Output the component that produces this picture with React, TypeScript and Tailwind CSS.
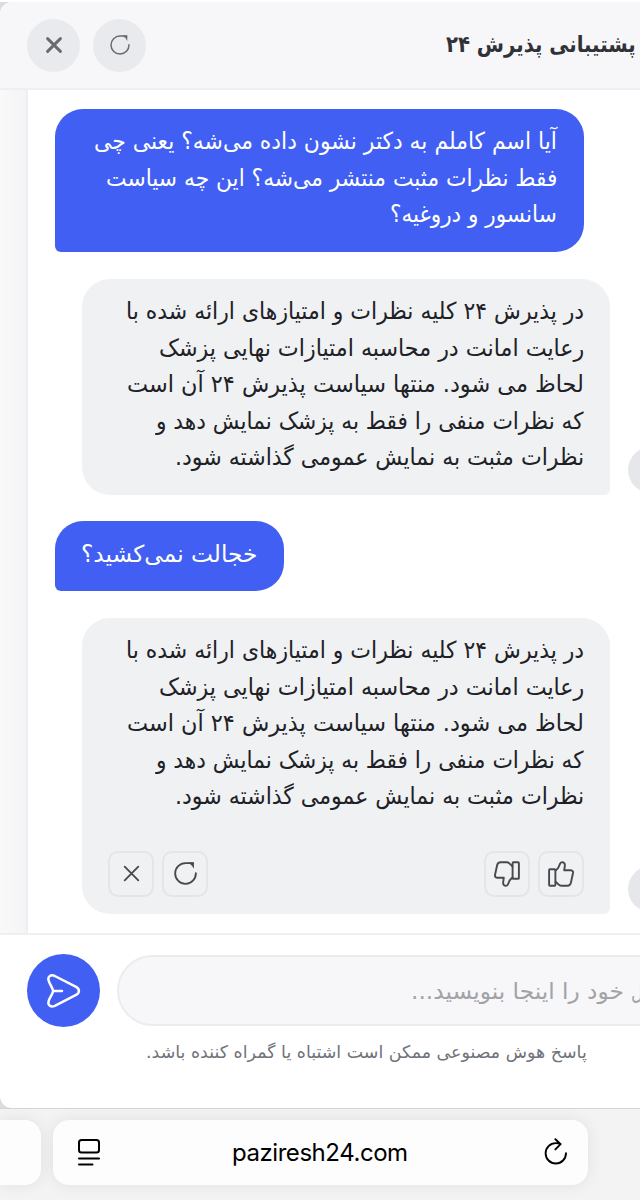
import React, { useLayoutEffect, useRef, useState } from 'react';
import clsx from 'clsx';

type Line = { text: string; width: number };

const question: Line[] = [
  { text: 'آیا اسم کاملم به دکتر نشون داده می‌شه؟ یعنی چی', width: 463 },
  { text: 'فقط نظرات مثبت منتشر می‌شه؟ این چه سیاست', width: 451 },
  { text: 'سانسور و دروغیه؟', width: 167 },
];

const followUp: Line[] = [{ text: 'خجالت نمی‌کشید؟', width: 176 }];

const answer: Line[] = [
  { text: 'در پذیرش ۲۴ کلیه نظرات و امتیازهای ارائه شده با', width: 458 },
  { text: 'رعایت امانت در محاسبه امتیازات نهایی پزشک', width: 425 },
  { text: 'لحاظ می شود. منتها سیاست پذیرش ۲۴ آن است', width: 457 },
  { text: 'که نظرات منفی را فقط به پزشک نمایش دهد و', width: 428 },
  { text: 'نظرات مثبت به نمایش عمومی گذاشته شود.', width: 409 },
];

// One line of text, condensed to the given width
function FitText({ text, width, className }: Line & { className?: string }) {
  const ref = useRef<HTMLSpanElement>(null);
  const [scale, setScale] = useState(1);

  useLayoutEffect(() => {
    if (ref.current) setScale(width / ref.current.offsetWidth);
  }, [text, width]);

  return (
    <span dir="rtl" className={clsx('block whitespace-nowrap', className)} style={{ width }}>
      <span ref={ref} className="inline-block origin-right" style={{ transform: `scaleX(${scale})` }}>
        {text}
      </span>
    </span>
  );
}

function Lines({ lines }: { lines: Line[] }) {
  return (
    <div dir="rtl" className="text-[23.5px] leading-[36.6px]">
      {lines.map((line) => (
        <FitText key={line.text} {...line} />
      ))}
    </div>
  );
}

function RestartIcon({ className }: { className?: string }) {
  return (
    <svg viewBox="0 0 20 20" fill="none" stroke="currentColor" className={className}>
      <path d="M19 9.8A9 9 0 1 1 10 1H16.6" strokeLinecap="round" />
      <path d="M12.5.4H17.3V5.9L15.6 3.2Z" fill="currentColor" stroke="none" />
    </svg>
  );
}

function CrossIcon({ className }: { className?: string }) {
  return (
    <svg viewBox="0 0 16 16" fill="none" stroke="currentColor" strokeLinecap="round" className={className}>
      <path d="M1.6 1.6 14.4 14.4M14.4 1.6 1.6 14.4" />
    </svg>
  );
}

function ThumbIcon({ className }: { className?: string }) {
  return (
    <svg
      viewBox="0 0 26 26"
      fill="none"
      stroke="currentColor"
      strokeWidth="1.9"
      strokeLinecap="round"
      strokeLinejoin="round"
      className={className}
    >
      <path d="M2 8.2H6.5Q7.4 8.2 7.4 9.1V23.8Q7.4 24.7 6.5 24.7H2Q1.1 24.7 1.1 23.8V9.1Q1.1 8.2 2 8.2Z" />
      <path d="M7.6 9.6Q10.2 7.5 11 5.2L12.2 2.4Q12.9 1 14.4 1.1 17 1.6 16.9 4.4L16.2 9.3H22.8Q25.4 9.6 25 12L22.9 21.8Q22.2 24.7 19.4 24.7H13.2Q11.7 24.7 10.4 23.4L7.6 20.8" />
    </svg>
  );
}

function ActionButton({ children }: { children: React.ReactNode }) {
  return (
    <button className="flex size-[46px] items-center justify-center rounded-[10px] border-2 border-[#e4e5e8] text-[#48494e]">
      {children}
    </button>
  );
}

function Avatar() {
  return <div className="mb-[2px] ml-[18px] size-[46px] shrink-0 rounded-full bg-[#e6e7eb]" />;
}

function UserBubble({ lines, className }: { lines: Line[]; className?: string }) {
  return (
    <div className={clsx('ml-[27px] rounded-[28px] rounded-bl-[6px] bg-[#415ff2] px-[27px] text-white', className)}>
      <Lines lines={lines} />
    </div>
  );
}

export default function App() {
  return (
    <div className="flex h-[1200px] w-[640px] flex-col overflow-hidden bg-[#f3f3f3] font-['DejaVu_Sans',sans-serif]">
      <div className="h-[2px] shrink-0 bg-white" />
      <div className="h-[1106px] shrink-0 bg-[#dcdcdd]">
        <div className="flex h-full flex-col overflow-hidden rounded-l-[12px] bg-white">
          <header className="flex h-[88px] shrink-0 items-center border-b-2 border-[#eeeff1] bg-[#f7f7fa] pl-[27px]">
            <button className="flex size-[53px] items-center justify-center rounded-full bg-[#e9eaed] text-[#686b70]">
              <CrossIcon className="size-[16px] stroke-[2.9]" />
            </button>
            <button className="ml-[13px] flex size-[53px] items-center justify-center rounded-full bg-[#e9eaed] text-[#686b70]">
              <RestartIcon className="size-[20px] stroke-[1.5]" />
            </button>
            <h1 className="mr-[4px] mb-[3px] ml-auto text-[22.5px] leading-8 font-bold text-[#303238]">
              <FitText text="پشتیبانی پذیرش ۲۴" width={190} />
            </h1>
          </header>

          <div className="flex h-[843px] shrink-0">
            <div className="w-[28px] shrink-0 border-r-2 border-[#eeeff1] bg-gradient-to-r from-[#f9f9fa] to-[#f4f4f6]" />
            <main className="flex w-[612px] flex-col items-start overflow-hidden pt-[19px]">
              <UserBubble lines={question} className="h-[143px] w-[529px] pt-[14px]" />

              <div className="mt-[27px] ml-[54px] flex items-end">
                <div className="h-[216px] w-[528px] rounded-[28px] rounded-br-[6px] bg-[#f0f1f3] px-[26px] pt-[14px] text-[#202126]">
                  <Lines lines={answer} />
                </div>
                <Avatar />
              </div>

              <UserBubble lines={followUp} className="mt-[26px] h-[70px] w-[229px] pt-[15px]" />

              <div className="mt-[27px] ml-[54px] flex items-end">
                <div className="h-[296px] w-[528px] rounded-[28px] rounded-br-[6px] bg-[#f0f1f3] px-[26px] pt-[14px] text-[#202126]">
                  <Lines lines={answer} />
                  <div className="mt-[36px] flex gap-[8px]">
                    <ActionButton>
                      <CrossIcon className="size-[17px] stroke-[1.7]" />
                    </ActionButton>
                    <ActionButton>
                      <RestartIcon className="size-[23px] stroke-[1.6]" />
                    </ActionButton>
                    <div className="grow" />
                    <ActionButton>
                      <ThumbIcon className="size-[26px] shrink-0 rotate-180" />
                    </ActionButton>
                    <ActionButton>
                      <ThumbIcon className="size-[26px] shrink-0" />
                    </ActionButton>
                  </div>
                </div>
                <Avatar />
              </div>
            </main>
          </div>

          <footer className="grow border-t-2 border-[#eeeff1]">
            <div className="mt-[19px] ml-[27px] flex items-center">
              <button className="flex size-[73px] shrink-0 items-center justify-center rounded-full bg-[#415ff2]">
                <svg
                  viewBox="0 0 34 34"
                  fill="none"
                  stroke="white"
                  strokeWidth="2.5"
                  strokeLinecap="round"
                  strokeLinejoin="round"
                  className="size-[34px]"
                >
                  <path d="M1.6 6.5C.4 2.4 4 .3 7.8 2L28.6 12.6C33 14.8 33 19 28.6 21.2L7.8 31.8C4 33.5.4 31.4 1.6 27.3 2.3 24.2 6 19.5 6 16.9S2.3 9.6 1.6 6.5ZM6 16.9H15" />
                </svg>
              </button>
              <div
                dir="rtl"
                className="ml-[17px] flex h-[71px] w-[620px] shrink-0 items-center gap-[7px] rounded-full border-2 border-[#ebecee] bg-[#f7f7fa] pr-[64px] text-[22.5px] leading-[36px] text-[#a2a3a7]"
              >
                <FitText text="سوال" width={40} />
                <FitText text="خود را اینجا بنویسید..." width={213} />
              </div>
            </div>
            <p className="mt-[10px] ml-[146px] text-[17.5px] leading-[30px] text-[#70737a]">
              <FitText text="پاسخ هوش مصنوعی ممکن است اشتباه یا گمراه کننده باشد." width={441} />
            </p>
          </footer>
        </div>
      </div>

      <div className="flex grow items-start border-t border-[#d5d5d6] pt-[11px]">
        <div className="h-[65px] w-[41px] rounded-r-[16px] bg-[#fdfdfd] shadow-[0_0_16px_rgba(0,0,0,0.08)]" />
        <div className="ml-[12px] flex h-[65px] w-[535px] items-center rounded-[16px] bg-[#fdfdfd] pr-[20px] pl-[25px] text-black shadow-[0_0_16px_rgba(0,0,0,0.08)]">
          <svg viewBox="0 0 22 27" fill="none" stroke="currentColor" strokeWidth="2" strokeLinecap="round" className="h-[27px] w-[22px]">
            <rect x="1" y="1" width="20" height="12.5" rx="2.5" />
            <path d="M1 19.5H21M1 25.5H14.5" />
          </svg>
          <span className="mr-auto ml-[132px] font-['Inter',sans-serif] text-[24px] tracking-[-0.45px]">paziresh24.com</span>
          <svg
            viewBox="0 0 24 27"
            fill="none"
            stroke="currentColor"
            strokeWidth="1.9"
            strokeLinecap="round"
            strokeLinejoin="round"
            className="mb-[2px] h-[27px] w-[24px]"
          >
            <path d="M22 15.3A10.2 10.2 0 1 1 11.8 5.1Q14.3 5.1 16.6 6.2M11.4 1.2 16.6 6.2 11.4 11.4" />
          </svg>
        </div>
      </div>
    </div>
  );
}
